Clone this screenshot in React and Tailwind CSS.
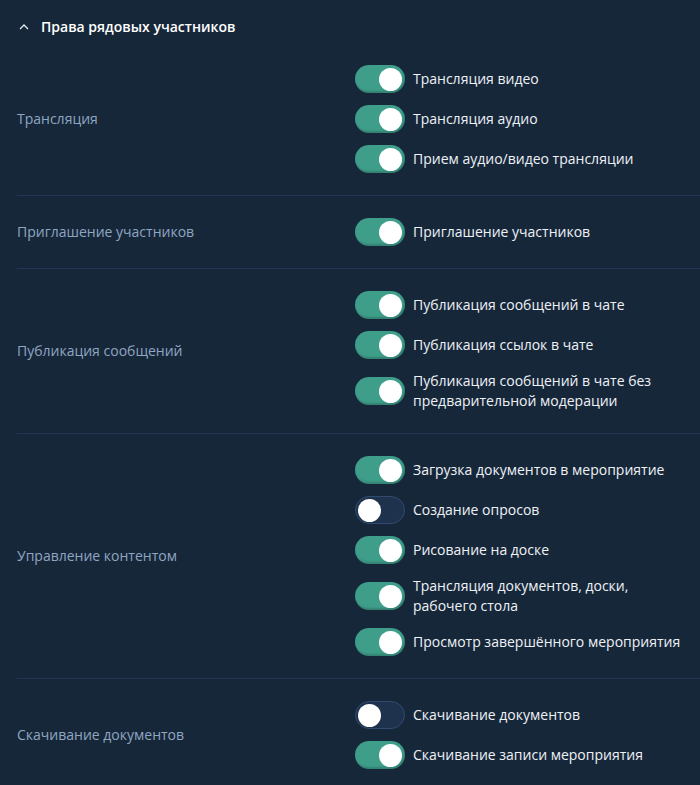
import React from "react";

const sections = [
  {
    label: "Трансляция",
    items: [
      { t: "Трансляция видео", on: true },
      { t: "Трансляция аудио", on: true },
      { t: "Прием аудио/видео трансляции", on: true },
    ],
  },
  {
    label: "Приглашение участников",
    items: [{ t: "Приглашение участников", on: true }],
  },
  {
    label: "Публикация сообщений",
    items: [
      { t: "Публикация сообщений в чате", on: true },
      { t: "Публикация ссылок в чате", on: true },
      { t: "Публикация сообщений в чате без предварительной модерации", on: true },
    ],
  },
  {
    label: "Управление контентом",
    items: [
      { t: "Загрузка документов в мероприятие", on: true },
      { t: "Создание опросов", on: false },
      { t: "Рисование на доске", on: true },
      { t: "Трансляция документов, доски, рабочего стола", on: true },
      { t: "Просмотр завершённого мероприятия", on: true },
    ],
  },
  {
    label: "Скачивание документов",
    items: [
      { t: "Скачивание документов", on: false },
      { t: "Скачивание записи мероприятия", on: true },
    ],
  },
];

function Toggle({ on }) {
  return on ? (
    <div className="relative h-[28px] w-[50px] shrink-0 rounded-full bg-[#3e9e8a] shadow-[inset_-1px_-2px_2px_rgba(0,0,0,0.18)]">
      <div className="absolute right-[3px] top-[2.5px] h-[23px] w-[23px] rounded-full bg-white" />
    </div>
  ) : (
    <div className="relative h-[28px] w-[50px] shrink-0 rounded-full border border-[#2f4b70] bg-[#1f324d]">
      <div className="absolute left-[2px] top-[1.5px] h-[23px] w-[23px] rounded-full bg-white" />
    </div>
  );
}

export default function App() {
  return (
    <div
      className="min-h-[785px] w-[700px] bg-[#17273a] text-[14px]"
      style={{ fontFamily: '"Open Sans", "Noto Sans", sans-serif' }}
    >
      <div className="flex items-center pl-[18px] pt-[16px] pb-[5px] h-[43px]">
        <svg width="12" height="12" viewBox="0 0 12 12" className="mr-[11px]">
          <path d="M2 8 L6 4 L10 8" fill="none" stroke="#dfe6ee" strokeWidth="1.4" />
        </svg>
        <span className="font-semibold leading-[22px] text-white">Права рядовых участников</span>
      </div>
      <div className="pl-[17px]">
        {sections.map((s, i) => (
          <div
            key={i}
            className={`flex items-center py-[22px] ${i < sections.length - 1 ? "border-b border-[#223550]" : ""}`}
          >
            <div className="w-[338px] shrink-0 text-[#8fa6c1] leading-5">{s.label}</div>
            <div className="flex flex-col gap-3 pr-[10px]">
              {s.items.map((it, j) => (
                <div key={j} className="flex items-center gap-2">
                  <Toggle on={it.on} />
                  <span className="leading-5 text-[#eef2f6]">{it.t}</span>
                </div>
              ))}
            </div>
          </div>
        ))}
      </div>
    </div>
  );
}
